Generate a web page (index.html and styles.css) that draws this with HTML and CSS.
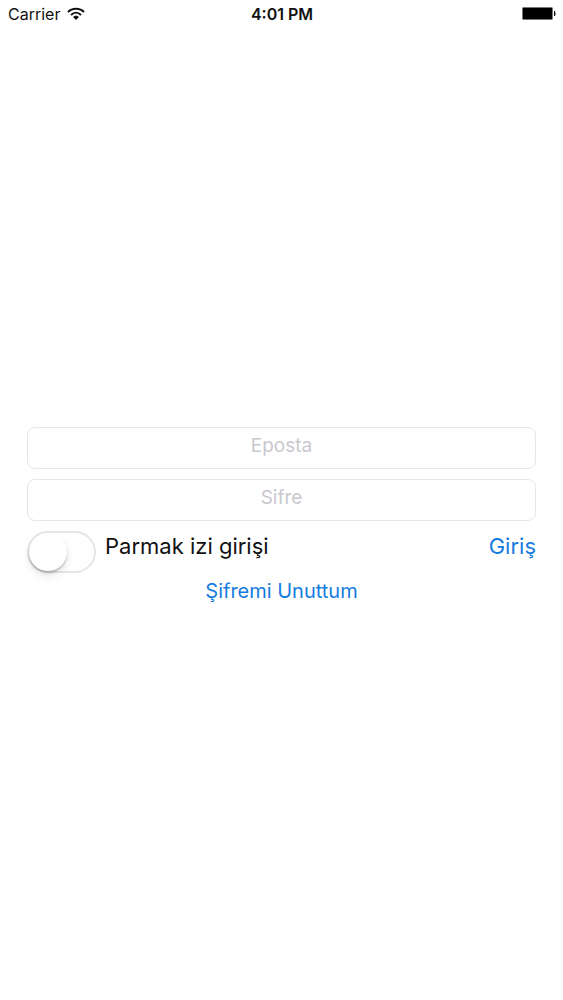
FILE: index.html
```html
<!DOCTYPE html>
<html lang="tr">
<head>
    <meta charset="UTF-8">
    <meta name="viewport" content="width=device-width, initial-scale=1">
    <title>Giriş</title>
    <link rel="stylesheet" href="styles.css">
</head>
<body>
    <header class="status-bar">
        <div class="carrier">
            <span>Carrier</span>
            <svg viewBox="0 0 18 14" width="18" height="14" aria-hidden="true">
                <path d="M1 5C5 0.500 13 0.500 17 5M4 8c3-3 7-3 10 0" fill="none" stroke="#111" stroke-width="2"/>
                <path d="M9 13L6 10c2-2 4-2 6 0z" fill="#111"/>
            </svg>
        </div>
        <div class="time">4:01 PM</div>
        <div class="battery">
            <svg viewBox="0 0 34 14" width="34" height="14" aria-hidden="true">
                <rect x=".5" y=".5" width="30" height="12" rx="1" fill="#000" stroke="#777"/>
                <path d="M32 4h1q1 3 0 5h-1z" fill="#000"/>
            </svg>
        </div>
    </header>

    <form class="login">
        <input class="field" type="email" placeholder="Eposta" aria-label="Eposta">
        <input class="field" type="password" placeholder="Sifre" aria-label="Sifre">
        <div class="row">
            <input class="switch" type="checkbox" id="touchId">
            <label for="touchId">Parmak izi girişi</label>
            <button class="submit" type="submit">Giriş</button>
        </div>
        <a class="forgot" href="#">Şifremi Unuttum</a>
    </form>
</body>
</html>
```

FILE: styles.css
```css
* {
    box-sizing: border-box;
}
body {
    margin: 0;
    min-height: 100vh;
    display: flex;
    flex-direction: column;
    background: #fff;
    color: #111;
    font-family: Inter, "Liberation Sans", sans-serif;
}

/* status bar */
.status-bar {
    display: grid;
    grid-template-columns: 1fr auto 1fr;
    align-items: center;
    height: 28px;
    padding: 0 7px 0 8px;
    font-size: 16px;
}
.carrier {
    display: flex;
    align-items: center;
    gap: 7px;
}
.time {
    font-weight: 600;
}
.battery {
    display: flex;
    justify-content: flex-end;
}

/* login form */
.login {
    flex: 1;
    display: flex;
    flex-direction: column;
    justify-content: center;
    padding: 2px 27px 0;
}
.field {
    width: 100%;
    height: 42px;
    margin-bottom: 10px;
    padding: 0 8px 6px;
    border: 1px solid #e8e5ea;
    border-radius: 8px;
    background: #fff;
    font: inherit;
    font-size: 19px;
    text-align: center;
    outline: none;
}
.field::placeholder {
    color: #c9c8ce;
    opacity: 1;
}
.row {
    display: flex;
    align-items: flex-start;
    height: 42px;
    font-size: 22px;
    line-height: 30px;
}
.switch {
    appearance: none;
    width: 69px;
    height: 42px;
    margin: 0 9px 0 0;
    border: 2px solid #e7e5ea;
    border-radius: 21px;
    background: #fff;
    cursor: pointer;
}
.switch::before {
    content: "";
    display: block;
    width: 38px;
    height: 38px;
    border-radius: 50%;
    background: #fff;
    box-shadow: 0 2px 2px rgba(0, 0, 0, 0.2), 0 5px 8px rgba(0, 0, 0, 0.1);
}
.switch:checked {
    background: #4cd964;
}
.switch:checked::before {
    margin-left: auto;
}
.submit {
    margin-left: auto;
    padding: 0;
    border: none;
    background: none;
    color: #147ce0;
    font: inherit;
    cursor: pointer;
}
.forgot {
    align-self: center;
    margin-top: 6px;
    color: #147ce0;
    font-size: 20px;
    line-height: 24px;
    text-decoration: none;
}
```
